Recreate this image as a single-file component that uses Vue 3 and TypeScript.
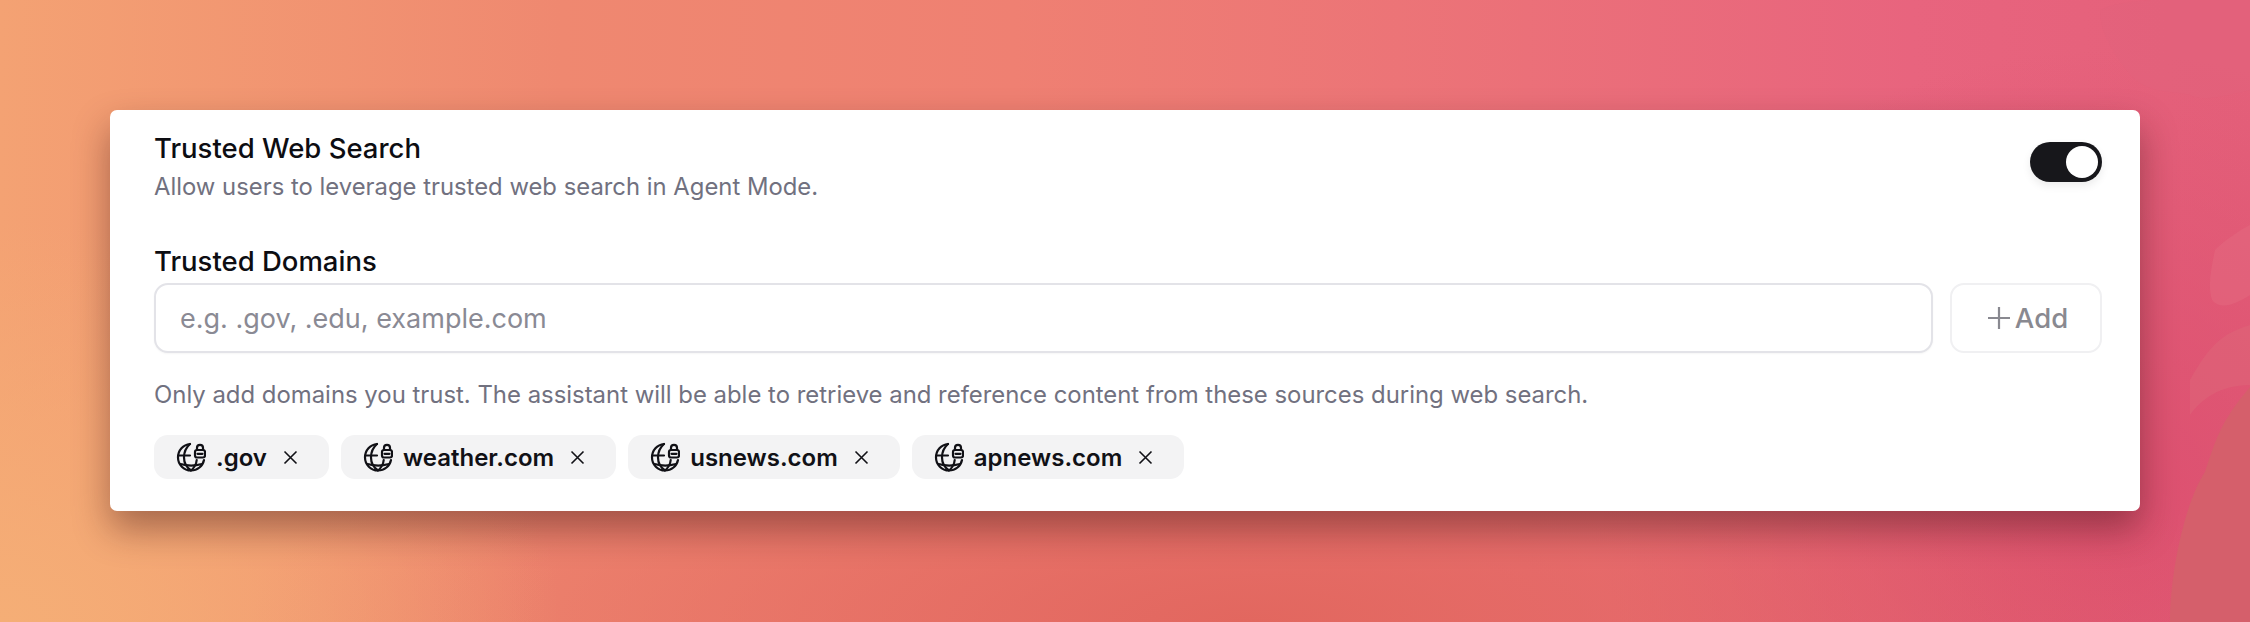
<script setup lang="ts">
const domains = ['.gov', 'weather.com', 'usnews.com', 'apnews.com']
</script>

<template>
  <div class="page">
    <svg class="blobs" width="2250" height="622" viewBox="0 0 2250 622">
      <path d="M2100 10c30-15 100-10 150-10v90c-40 10-50 10-60 5-20-5-40 0-60-20-15-20-30-40-30-65z" fill="#e2627c" opacity="0.5" />
      <path d="M2215 250c10-10 25-20 35-25v70c-15 10-30 15-38 5-5-15 0-35 3-50z" fill="#e36a80" opacity="0.5" />
      <path d="M2190 380c15-25 25-45 60-55v60c-30 0-50 15-60 30z" fill="#de6478" opacity="0.6" />
      <path d="M2170 622c0-50 15-120 35-150 10-30 15-50 45-85v235z" fill="#d4616a" opacity="0.9" />
    </svg>
    <div class="card">
      <div class="head">
        <div>
          <div class="title">Trusted Web Search</div>
          <div class="desc">Allow users to leverage trusted web search in Agent Mode.</div>
        </div>
        <div class="toggle"><span class="knob"></span></div>
      </div>

      <div class="label">Trusted Domains</div>
      <div class="add-row">
        <input class="domain-input" type="text" placeholder="e.g. .gov, .edu, example.com" />
        <button class="add-btn" type="button">
          <svg width="24" height="24" viewBox="0 0 24 24" fill="none" stroke="currentColor" stroke-width="2.2">
            <path d="M12 1v22M1 12h22" />
          </svg>
          Add
        </button>
      </div>
      <div class="hint">
        Only add domains you trust. The assistant will be able to retrieve and reference content from these sources during web search.
      </div>

      <div class="chips">
        <div v-for="d in domains" :key="d" class="chip">
          <svg class="globe" width="30" height="30" viewBox="0 0 30 30" fill="none" stroke="currentColor" stroke-width="2.2" stroke-linecap="round" stroke-linejoin="round">
            <path d="M14 2C7.200 2.600 2 8.400 2 15.500S7.800 28.500 15 28.500c6.500 0 11.800-4.500 13-10.500" />
            <path d="M14 2c-4 3.500-6 8-6 13.500s2.500 9.800 7 13c3.300-2.800 5.300-6.200 5.700-10.500" />
            <path d="M3 13.500h11M4.500 22c7 2 14.500 2 21.500 0" />
            <rect x="19" y="8" width="10" height="7.500" rx="2" />
            <path d="M21 8V5.800a3 3 0 0 1 6 0V8" />
            <path d="M21.500 11.800h5" />
          </svg>
          <span class="chip-text">{{ d }}</span>
          <svg class="close" width="15" height="15" viewBox="0 0 15 15" fill="none" stroke="currentColor" stroke-width="1.600">
            <path d="M1.500 1.500l12 12M13.500 1.500l-12 12" />
          </svg>
        </div>
      </div>
    </div>
  </div>
</template>

<style>
html, body { margin: 0; padding: 0; }
</style>

<style scoped>
.page {
  position: relative;
  width: 2250px;
  height: 622px;
  box-sizing: border-box;
  padding: 110px 110px 0;
  overflow: hidden;
  font-family: Inter, "Liberation Sans", sans-serif;
  background:
    radial-gradient(ellipse 560px 400px at 0% 100%, #f5ae76 0%, rgba(245, 174, 118, 0) 100%),
    radial-gradient(ellipse 1000px 280px at 1250px 622px, #e2675f 0%, rgba(226, 103, 95, 0) 100%),
    radial-gradient(ellipse 500px 450px at 2100px 500px, #dc4f6f 0%, rgba(220, 79, 111, 0) 100%),
    linear-gradient(90deg, #f4a273 0%, #ef8870 25%, #ef8072 45%, #e8647e 85%, #e4607a 100%);
}

.blobs {
  position: absolute;
  top: 0;
  left: 0;
}

.card {
  position: relative;
  width: 2030px;
  height: 401px;
  box-sizing: border-box;
  padding: 21px 38px 0 44px;
  background: #fff;
  border-radius: 7px;
  box-shadow: 0 18px 36px rgba(60, 20, 20, 0.42);
}

.head {
  display: flex;
  justify-content: space-between;
  align-items: flex-start;
}

.title {
  font-size: 27.5px;
  line-height: 34px;
  font-weight: 500;
  color: #0d0d12;
}

.desc {
  margin-top: 7px;
  font-size: 23.85px;
  line-height: 30px;
  color: #71717f;
}

.toggle {
  margin-top: 11px;
  width: 72px;
  height: 40px;
  box-sizing: border-box;
  padding: 4px;
  border-radius: 20px;
  background: #17171b;
  display: flex;
  justify-content: flex-end;
  box-shadow: 0 4px 8px rgba(0, 0, 0, 0.08);
}

.knob {
  width: 32px;
  height: 32px;
  border-radius: 50%;
  background: #fff;
}

.label {
  margin-top: 42px;
  font-size: 27.5px;
  line-height: 34px;
  font-weight: 500;
  color: #0d0d12;
}

.add-row {
  display: flex;
  gap: 17px;
  margin-top: 5px;
}

.domain-input {
  flex: 1;
  height: 70px;
  box-sizing: border-box;
  padding: 0 24px;
  border: 2px solid #e3e3e8;
  border-radius: 14px;
  font-family: inherit;
  font-size: 27px;
  outline: none;
  box-shadow: 0 1px 2px rgba(0, 0, 0, 0.04);
}

.domain-input::placeholder {
  color: #8a8a94;
  opacity: 1;
}

.add-btn {
  width: 152px;
  height: 70px;
  border: 2px solid #f0f0f2;
  border-radius: 14px;
  background: #fff;
  color: #898990;
  font-family: inherit;
  font-size: 27.5px;
  font-weight: 500;
  display: flex;
  align-items: center;
  justify-content: center;
  gap: 4px;
  padding: 0 0 0 3px;
}

.hint {
  margin-top: 27px;
  font-size: 23.9px;
  line-height: 30px;
  color: #71717f;
}

.chips {
  display: flex;
  gap: 12px;
  margin-top: 25px;
}

.chip {
  height: 44px;
  box-sizing: border-box;
  padding: 0 31px 0 22px;
  display: flex;
  align-items: center;
  border-radius: 14px;
  background: #f3f3f4;
  color: #111116;
}

.chip-text {
  margin-left: 10px;
  font-size: 24px;
  font-weight: 600;
}

.close {
  margin-left: 16px;
}
</style>
